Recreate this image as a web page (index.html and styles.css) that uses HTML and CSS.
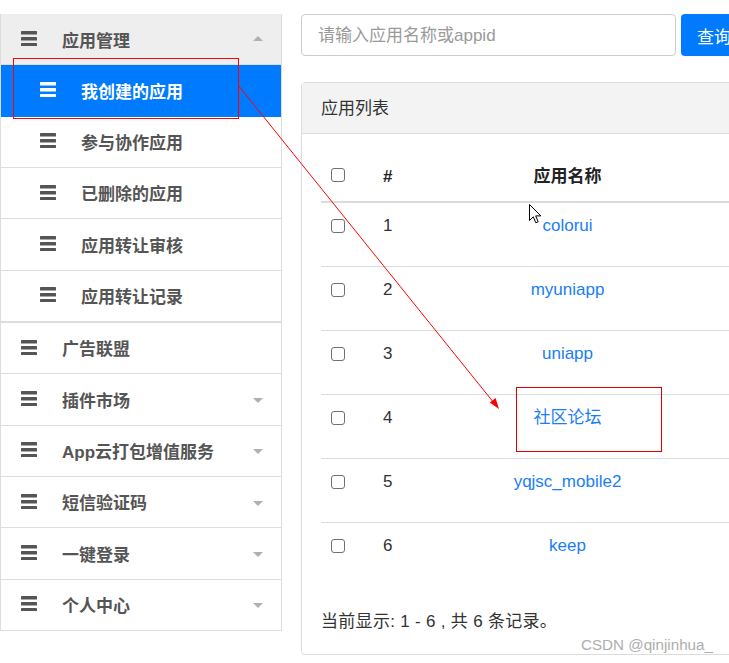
FILE: index.html
```html
<!DOCTYPE html>
<html lang="zh">
<head>
<meta charset="utf-8">
<title>应用管理</title>
<link rel="stylesheet" href="styles.css">
</head>
<body>
<div class="page">
  <aside class="sidebar">
    <div class="menu-item top head">
      <svg class="bars" viewBox="0 0 16 16"><rect x="0" y="1" width="16" height="3.6" rx="0.6"/><rect x="0" y="7" width="16" height="3.6" rx="0.6"/><rect x="0" y="13" width="16" height="3.6" rx="0.6"/></svg>
      <span class="label">应用管理</span><i class="caret up"></i>
    </div>
    <div class="submenu">
      <div class="menu-item sub active">
        <svg class="bars" viewBox="0 0 16 16"><rect x="0" y="1" width="16" height="3.6" rx="0.6"/><rect x="0" y="7" width="16" height="3.6" rx="0.6"/><rect x="0" y="13" width="16" height="3.6" rx="0.6"/></svg>
        <span class="label">我创建的应用</span>
      </div>
      <div class="menu-item sub">
        <svg class="bars" viewBox="0 0 16 16"><rect x="0" y="1" width="16" height="3.6" rx="0.6"/><rect x="0" y="7" width="16" height="3.6" rx="0.6"/><rect x="0" y="13" width="16" height="3.6" rx="0.6"/></svg>
        <span class="label">参与协作应用</span>
      </div>
      <div class="menu-item sub">
        <svg class="bars" viewBox="0 0 16 16"><rect x="0" y="1" width="16" height="3.6" rx="0.6"/><rect x="0" y="7" width="16" height="3.6" rx="0.6"/><rect x="0" y="13" width="16" height="3.6" rx="0.6"/></svg>
        <span class="label">已删除的应用</span>
      </div>
      <div class="menu-item sub">
        <svg class="bars" viewBox="0 0 16 16"><rect x="0" y="1" width="16" height="3.6" rx="0.6"/><rect x="0" y="7" width="16" height="3.6" rx="0.6"/><rect x="0" y="13" width="16" height="3.6" rx="0.6"/></svg>
        <span class="label">应用转让审核</span>
      </div>
      <div class="menu-item sub">
        <svg class="bars" viewBox="0 0 16 16"><rect x="0" y="1" width="16" height="3.6" rx="0.6"/><rect x="0" y="7" width="16" height="3.6" rx="0.6"/><rect x="0" y="13" width="16" height="3.6" rx="0.6"/></svg>
        <span class="label">应用转让记录</span>
      </div>
    </div>
    <div class="menu-item top">
      <svg class="bars" viewBox="0 0 16 16"><rect x="0" y="1" width="16" height="3.6" rx="0.6"/><rect x="0" y="7" width="16" height="3.6" rx="0.6"/><rect x="0" y="13" width="16" height="3.6" rx="0.6"/></svg>
      <span class="label">广告联盟</span>
    </div>
    <div class="menu-item top">
      <svg class="bars" viewBox="0 0 16 16"><rect x="0" y="1" width="16" height="3.6" rx="0.6"/><rect x="0" y="7" width="16" height="3.6" rx="0.6"/><rect x="0" y="13" width="16" height="3.6" rx="0.6"/></svg>
      <span class="label">插件市场</span><i class="caret down"></i>
    </div>
    <div class="menu-item top">
      <svg class="bars" viewBox="0 0 16 16"><rect x="0" y="1" width="16" height="3.6" rx="0.6"/><rect x="0" y="7" width="16" height="3.6" rx="0.6"/><rect x="0" y="13" width="16" height="3.6" rx="0.6"/></svg>
      <span class="label">App云打包增值服务</span><i class="caret down"></i>
    </div>
    <div class="menu-item top">
      <svg class="bars" viewBox="0 0 16 16"><rect x="0" y="1" width="16" height="3.6" rx="0.6"/><rect x="0" y="7" width="16" height="3.6" rx="0.6"/><rect x="0" y="13" width="16" height="3.6" rx="0.6"/></svg>
      <span class="label">短信验证码</span><i class="caret down"></i>
    </div>
    <div class="menu-item top">
      <svg class="bars" viewBox="0 0 16 16"><rect x="0" y="1" width="16" height="3.6" rx="0.6"/><rect x="0" y="7" width="16" height="3.6" rx="0.6"/><rect x="0" y="13" width="16" height="3.6" rx="0.6"/></svg>
      <span class="label">一键登录</span><i class="caret down"></i>
    </div>
    <div class="menu-item top last">
      <svg class="bars" viewBox="0 0 16 16"><rect x="0" y="1" width="16" height="3.6" rx="0.6"/><rect x="0" y="7" width="16" height="3.6" rx="0.6"/><rect x="0" y="13" width="16" height="3.6" rx="0.6"/></svg>
      <span class="label">个人中心</span><i class="caret down"></i>
    </div>
  </aside>

  <main class="main">
    <div class="search">
      <input class="search-input" type="text" placeholder="请输入应用名称或appid">
      <button class="search-btn" type="button">查询</button>
    </div>
    <section class="card">
      <div class="card-header">应用列表</div>
      <div class="card-body">
        <table class="apps">
          <thead>
            <tr><th class="c-check"><input class="cb" type="checkbox"></th><th class="c-num">#</th><th class="c-name">应用名称</th><th class="c-rest"></th></tr>
          </thead>
          <tbody>
            <tr><td class="c-check"><input class="cb" type="checkbox"></td><td class="c-num">1</td><td class="c-name"><a href="#">colorui</a></td><td class="c-rest"></td></tr>
            <tr><td class="c-check"><input class="cb" type="checkbox"></td><td class="c-num">2</td><td class="c-name"><a href="#">myuniapp</a></td><td class="c-rest"></td></tr>
            <tr><td class="c-check"><input class="cb" type="checkbox"></td><td class="c-num">3</td><td class="c-name"><a href="#">uniapp</a></td><td class="c-rest"></td></tr>
            <tr><td class="c-check"><input class="cb" type="checkbox"></td><td class="c-num">4</td><td class="c-name"><a href="#">社区论坛</a></td><td class="c-rest"></td></tr>
            <tr><td class="c-check"><input class="cb" type="checkbox"></td><td class="c-num">5</td><td class="c-name"><a href="#">yqjsc_mobile2</a></td><td class="c-rest"></td></tr>
            <tr><td class="c-check"><input class="cb" type="checkbox"></td><td class="c-num">6</td><td class="c-name"><a href="#">keep</a></td><td class="c-rest"></td></tr>
          </tbody>
        </table>
        <p class="summary">当前显示: 1 - 6 , 共 6 条记录。</p>
      </div>
    </section>
  </main>
</div>

<svg class="annot" viewBox="0 0 729 663" width="729" height="663">
  <rect x="13.5" y="58.5" width="225" height="60" fill="none" stroke="#ff0000" stroke-width="1"/>
  <line x1="238" y1="85" x2="494" y2="403" stroke="#ff0000" stroke-width="1"/>
  <polygon points="499,409 489.8,402.6 495.6,397.9" fill="#ff0000"/>
  <rect x="516.5" y="387.5" width="145" height="64" fill="none" stroke="#e00000" stroke-width="1"/>
</svg>
<svg class="cursor" viewBox="0 0 13 21" width="13" height="21">
  <path d="M0.5 0.5 L0.5 16.5 L4.3 12.8 L6.8 18.8 L9.2 17.8 L6.7 11.9 L11.8 11.9 Z" fill="#fff" stroke="#000" stroke-width="1" stroke-linejoin="miter"/>
</svg>
<div class="watermark">CSDN @qinjinhua_</div>
</body>
</html>
```

FILE: styles.css
```css
html, body {
  margin: 0;
  padding: 0;
  overflow: hidden;
  background: #fff;
}
body {
  width: 729px;
  height: 663px;
  position: relative;
  font-family: "Liberation Sans", "Noto Sans CJK SC", sans-serif;
  color: #333;
}
.page {
  display: flex;
  align-items: flex-start;
  gap: 19px;
  padding-top: 14px;
}

/* Sidebar */
.sidebar {
  flex: none;
  width: 280px;
  border: 1px solid #ddd;
  border-top: none;
  background: #fff;
}
.menu-item {
  display: flex;
  align-items: center;
  padding: 14.5px 18px 9.5px 20px;
  line-height: 26.33px;
  font-size: 17px;
  font-weight: bold;
  color: #555;
  border-bottom: 1px solid #ddd;
}
.menu-item.last { border-bottom: none; }
.menu-item.head { background: #eeeeee; }
.menu-item.sub { padding-left: 39px; }
.submenu { border-bottom: 1px solid #ddd; }
.menu-item.active {
  background: #007bff;
  color: #fff;
  border-bottom-color: #007bff;
}
.bars {
  flex: none;
  width: 16px;
  height: 16px;
  fill: currentColor;
  margin-right: 25px;
  margin-top: -8px;
}
.label { flex: 1; white-space: nowrap; }
.caret {
  flex: none;
  width: 0;
  height: 0;
  border-left: 5px solid transparent;
  border-right: 5px solid transparent;
}
.caret.up { border-bottom: 5px solid #b0b0b0; margin-top: -7px; }
.caret.down { border-top: 5px solid #b0b0b0; margin-top: -3px; }

/* Main */
.main {
  flex: none;
  width: 620px;
}
.search {
  display: flex;
  gap: 5px;
}
.search-input {
  box-sizing: border-box;
  width: 375px;
  height: 42px;
  border: 1px solid #ccc;
  border-radius: 4px;
  padding: 2px 16px 0;
  font-family: "Liberation Sans", "Noto Sans CJK SC", sans-serif;
  font-size: 17px;
  color: #333;
  outline: none;
}
.search-input::placeholder { color: #9a9a9a; }
.search-btn {
  height: 42px;
  padding: 0 16px;
  border: none;
  border-radius: 4px;
  background: #007bff;
  color: #fff;
  font-family: "Liberation Sans", "Noto Sans CJK SC", sans-serif;
  font-size: 17px;
  width: 80px;
  text-align: left;
}

.card {
  margin-top: 26px;
  border: 1px solid #ddd;
  border-radius: 4px;
  background: #fff;
}
.card-header {
  height: 50px;
  line-height: 52px;
  padding: 0 19px;
  background: #f3f3f3;
  border-bottom: 1px solid #ddd;
  font-size: 17px;
  color: #333;
}
.card-body {
  padding: 19px 19px 20px;
}
.apps {
  width: 100%;
  border-collapse: collapse;
  font-size: 17px;
}
.apps th {
  padding: 12px 10px;
  line-height: 24px;
  font-weight: bold;
  color: #222;
  border-bottom: 2px solid #dcdcdc;
  vertical-align: middle;
}
.apps td {
  padding: 11px 10px 28px;
  line-height: 24px;
  color: #333;
  border-top: 1px solid #dcdcdc;
  vertical-align: top;
}
.apps tbody tr:first-child td { border-top: none; }
.c-check { width: 33px; text-align: left; }
.c-num { width: 60px; text-align: left; }
.c-name { width: 209px; text-align: center; }
.apps th.c-num { padding-left: 9px; }
.apps td.c-num { padding-left: 9px; }
.apps a {
  color: #1a7ef5;
  text-decoration: none;
}
.cb {
  appearance: none;
  -webkit-appearance: none;
  display: block;
  box-sizing: border-box;
  width: 14px;
  height: 14px;
  margin: 5px 0 0;
  border: 1.5px solid #707070;
  border-radius: 3px;
  background: #fff;
}
.apps th .cb { margin-top: -4px; }
.summary {
  margin: 24px 0 0;
  font-size: 17px;
  line-height: 24px;
  color: #333;
  letter-spacing: 0.3px;
}

/* Overlays (screenshot annotations) */
.annot {
  position: absolute;
  left: 0;
  top: 0;
  pointer-events: none;
}
.cursor {
  position: absolute;
  left: 529px;
  top: 204px;
  pointer-events: none;
}
.watermark {
  position: absolute;
  left: 581px;
  top: 635px;
  font-size: 15.2px;
  line-height: 20px;
  color: #aeaeae;
  white-space: nowrap;
}
```
